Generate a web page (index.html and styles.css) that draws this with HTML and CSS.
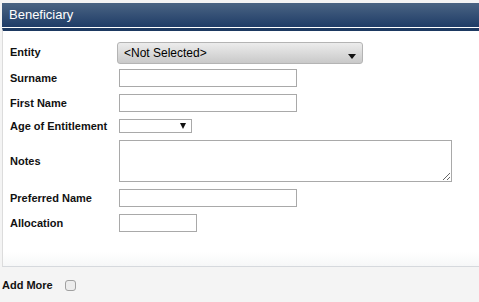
FILE: index.html
```html
<!DOCTYPE html>
<html lang="en">
<head>
    <meta charset="UTF-8">
    <meta name="viewport" content="width=device-width, initial-scale=1.0">
    <title>Beneficiary</title>
    <link rel="stylesheet" href="styles.css">
</head>
<body>
    <div class="page">
        <div class="panel-head">Beneficiary</div>
        <div class="panel">
            <div class="form-grid">
                <label class="field-label" for="entity">Entity</label>
                <div class="select-wrap select-entity">
                    <select id="entity" class="select-grey">
                        <option>&lt;Not Selected&gt;</option>
                    </select>
                </div>

                <label class="field-label" for="surname">Surname</label>
                <input id="surname" class="text-input" type="text">

                <label class="field-label" for="firstname">First Name</label>
                <input id="firstname" class="text-input" type="text">

                <label class="field-label" for="age">Age of Entitlement</label>
                <div class="select-wrap select-age">
                    <select id="age" class="select-plain">
                        <option></option>
                    </select>
                </div>

                <label class="field-label" for="notes">Notes</label>
                <textarea id="notes" class="notes-input"></textarea>

                <label class="field-label" for="preferred">Preferred Name</label>
                <input id="preferred" class="text-input" type="text">

                <label class="field-label" for="allocation">Allocation</label>
                <input id="allocation" class="text-input short-input" type="text">
            </div>
        </div>
        <div class="add-more">
            <label for="addmore">Add More</label>
            <input id="addmore" class="check" type="checkbox">
        </div>
    </div>
</body>
</html>
```

FILE: styles.css
```css
body {
    margin: 0;
    background: #f4f4f4;
    font-family: "Liberation Sans", Arial, sans-serif;
    color: #111;
    overflow: hidden;
}
.page {
    padding-top: 3px;
}
.panel-head {
    margin-left: 2px;
    height: 24px;
    line-height: 23px;
    padding-left: 7px;
    font-size: 13px;
    color: #fff;
    background: linear-gradient(#4a6483, #1f3c67);
    border-bottom: 1px solid #fff;
}
.panel {
    margin-left: 2px;
    background: linear-gradient(#fff 0, #fff calc(100% - 14px), #f6f7f8 100%);
    border-top: 3px solid #1d3961;
    border-left: 1px solid #dcdcdc;
    border-bottom: 1px solid #d6d9dd;
    padding: 11px 0 34px 7px;
}
.form-grid {
    display: grid;
    grid-template-columns: 107px auto;
    grid-template-rows: 20px 18px 18px 14px 42px 18px 18px;
    justify-items: start;
    align-items: center;
    row-gap: 7px;
}
.field-label {
    font-size: 11px;
    font-weight: bold;
}
.select-wrap {
    position: relative;
}
.select-entity {
    align-self: start;
}
.select-wrap::after {
    content: "";
    position: absolute;
    top: 50%;
    border-left: 4px solid transparent;
    border-right: 4px solid transparent;
    border-top: 5px solid #111;
    pointer-events: none;
}
.select-entity::after {
    right: 7px;
    margin-top: 1px;
}
.select-age::after {
    right: 6px;
    margin-top: -3px;
    border-left-width: 3px;
    border-right-width: 3px;
    border-top-width: 6px;
}
.select-grey,
.select-plain {
    -webkit-appearance: none;
    appearance: none;
    display: block;
    margin: 0;
    font-family: "Liberation Sans", Arial, sans-serif;
    color: #000;
}
.select-grey {
    width: 246px;
    height: 22px;
    padding: 0 0 0 6px;
    font-size: 12px;
    border: 1px solid #b4b4b4;
    border-radius: 3px;
    background: linear-gradient(#ececec, #c9c9c9);
}
.select-plain {
    width: 73px;
    height: 14px;
    padding: 0;
    font-size: 11px;
    border: 1px solid #a9a9a9;
    border-radius: 0;
    background: #fff;
    margin-left: 2px;
}
.text-input,
.notes-input {
    box-sizing: border-box;
    margin: 0 0 0 2px;
    border: 1px solid #a9a9a9;
    border-radius: 0;
    background: #fff;
    font-family: "Liberation Sans", Arial, sans-serif;
    font-size: 12px;
    padding: 0 3px;
}
.text-input {
    width: 178px;
    height: 18px;
}
.short-input {
    width: 78px;
}
.notes-input {
    width: 333px;
    height: 42px;
    resize: both;
    display: block;
}
.add-more {
    display: flex;
    align-items: center;
    margin-top: 12px;
    padding-left: 2px;
    height: 12px;
    font-size: 11px;
    font-weight: bold;
}
.check {
    -webkit-appearance: none;
    appearance: none;
    width: 11px;
    height: 11px;
    margin: 0 0 0 12px;
    border: 1px solid #a0a0a0;
    border-radius: 3px;
    background: #ececec;
}
```
